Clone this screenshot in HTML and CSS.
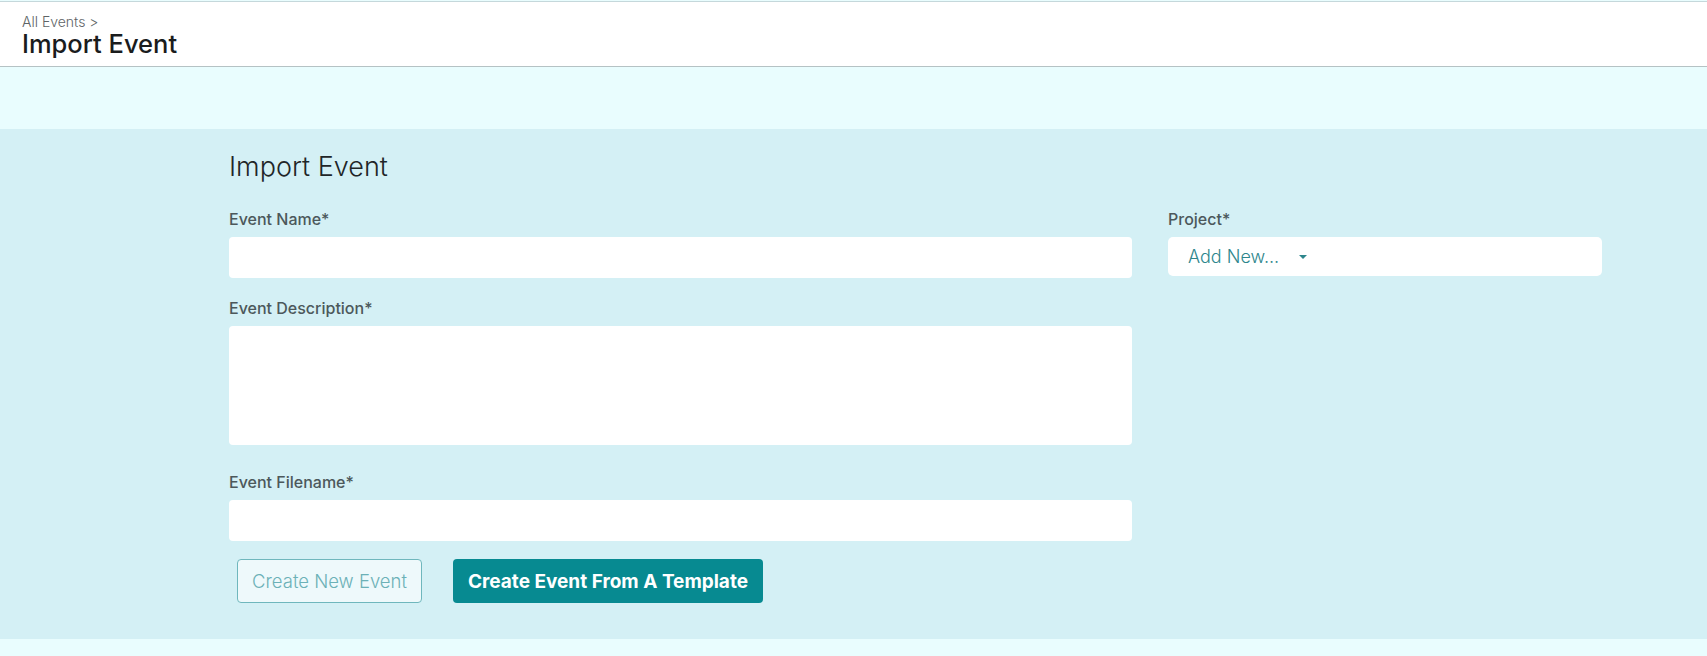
FILE: index.html
```html
<!DOCTYPE html>
<html lang="en">
<head>
    <meta charset="UTF-8">
    <meta name="viewport" content="width=device-width, initial-scale=1.0">
    <title>Import Event</title>
    <link rel="stylesheet" href="styles.css">
</head>
<body>
    <header class="page-header">
        <div class="crumb">All Events &gt;</div>
        <h1 class="page-title">Import Event</h1>
    </header>

    <main class="panel">
        <h2 class="panel-title">Import Event</h2>

        <form class="event-form" onsubmit="return false">
            <div class="col-main">
                <div class="form-group">
                    <label for="name">Event Name*</label>
                    <input type="text" id="name" name="name">
                </div>

                <div class="form-group">
                    <label for="description">Event Description*</label>
                    <textarea id="description" name="description"></textarea>
                </div>

                <div class="form-group">
                    <label for="filename">Event Filename*</label>
                    <input type="text" id="filename" name="filename">
                </div>

                <div class="actions">
                    <button type="button" class="btn btn-outline">Create New Event</button>
                    <button type="submit" class="btn btn-primary">Create Event From A Template</button>
                </div>
            </div>

            <div class="col-side">
                <div class="form-group">
                    <label>Project*</label>
                    <div class="dropdown">
                        <span>Add New...</span>
                        <span class="caret"></span>
                    </div>
                </div>
            </div>
        </form>
    </main>
</body>
</html>
```

FILE: styles.css
```css
body { margin: 0; background: #e9fdfe; font-family: Inter, "Open Sans", sans-serif; color: #1d2326; }

.page-header { margin-top: 1px; border-top: 1px solid #c5d8db; border-bottom: 1px solid #b5c2c4; background: #fff; padding: 12px 22px 8px; }
.crumb { font-size: 14px; line-height: 16px; font-weight: 300; color: #5e6466; }
.page-title { margin: 0; font-size: 25.5px; line-height: 28px; font-weight: 500; color: #1a1c1d; }

.panel { margin-top: 62px; background: #d4f0f5; padding: 22px 105px 36px 229px; }
.panel-title { margin: 0 0 26px; font-size: 27px; line-height: 32px; font-weight: 300; color: #1f2628; }

.event-form { display: grid; grid-template-columns: 903px 434px; column-gap: 36px; }

.form-group label { display: block; margin-bottom: 8px; font-size: 16px; line-height: 20px; font-weight: 500; color: #4c585b; }
.form-group input, .form-group textarea { display: block; box-sizing: border-box; width: 100%; border: none; border-radius: 4px; background: #fff; font: inherit; }
.form-group input { height: 41px; margin-bottom: 20px; }
.form-group textarea { height: 119px; margin-bottom: 27px; resize: none; }
.col-main .form-group:nth-child(3) input { margin-bottom: 18px; }

.dropdown { display: flex; align-items: center; gap: 20px; height: 39px; padding: 0 20px; border-radius: 5px; background: #fff; font-size: 18px; font-weight: 300; color: #2d868c; }
.caret { width: 0; height: 0; border-left: 4px solid transparent; border-right: 4px solid transparent; border-top: 4px solid #2d868c; }

.actions { display: flex; gap: 31px; padding-left: 8px; }
.btn { box-sizing: border-box; height: 44px; border-radius: 4px; font-family: inherit; cursor: pointer; }
.btn-outline { width: 185px; border: 1px solid #6fb7bd; background: #eef9fb; color: #6cb1b7; font-size: 18.5px; font-weight: 300; }
.btn-primary { width: 310px; border: none; background: #078a91; color: #fff; font-size: 19px; font-weight: 700; }
```
